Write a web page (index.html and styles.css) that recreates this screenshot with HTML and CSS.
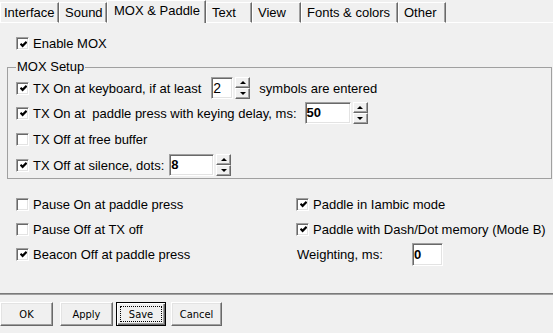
FILE: index.html
```html
<!DOCTYPE html>
<html lang="en">
<head>
  <meta charset="UTF-8" />
  <title>Settings - MOX &amp; Paddle</title>
  <link rel="stylesheet" href="styles.css">
</head>
<body>

  <div class="tabs">
    <div class="tab tab-first">Interface</div>
    <div class="tab">Sound</div>
    <div class="tab tab-active">MOX &amp; Paddle</div>
    <div class="tab">Text</div>
    <div class="tab">View</div>
    <div class="tab">Fonts &amp; colors</div>
    <div class="tab">Other</div>
    <div class="tab-rest"></div>
  </div>

  <main class="panel">
    <div class="check check-enable">
      <span class="box"><svg viewBox="0 0 7 7" width="7" height="7"><polyline points="0.5,2.8 2.6,4.9 6.6,0.9" /></svg></span>
      Enable MOX
    </div>

    <fieldset class="group">
      <legend>MOX Setup</legend>

      <div class="row">
        <span class="box"><svg viewBox="0 0 7 7" width="7" height="7"><polyline points="0.5,2.8 2.6,4.9 6.6,0.9" /></svg></span>
        <span>TX On at keyboard, if at least</span>
        <span class="spin spin-symbols">
          <span class="edit edit-plain">2</span>
          <span class="spin-btns"><span class="spin-btn spin-up"></span><span class="spin-btn spin-down"></span></span>
        </span>
        <span class="after-spin">symbols are entered</span>
      </div>

      <div class="row">
        <span class="box"><svg viewBox="0 0 7 7" width="7" height="7"><polyline points="0.5,2.8 2.6,4.9 6.6,0.9" /></svg></span>
        <span>TX On at&nbsp; paddle press with keying delay, ms:</span>
        <span class="spin spin-delay">
          <span class="edit">50</span>
          <span class="spin-btns"><span class="spin-btn spin-up"></span><span class="spin-btn spin-down"></span></span>
        </span>
      </div>

      <div class="row row-tall">
        <span class="box"></span>
        <span>TX Off at free buffer</span>
      </div>

      <div class="row">
        <span class="box"><svg viewBox="0 0 7 7" width="7" height="7"><polyline points="0.5,2.8 2.6,4.9 6.6,0.9" /></svg></span>
        <span>TX Off at silence, dots:</span>
        <span class="spin spin-dots">
          <span class="edit">8</span>
          <span class="spin-btns"><span class="spin-btn spin-up"></span><span class="spin-btn spin-down"></span></span>
        </span>
      </div>
    </fieldset>

    <div class="options">
      <div class="col">
        <div class="row">
          <span class="box"></span>
          <span>Pause On at paddle press</span>
        </div>
        <div class="row">
          <span class="box"></span>
          <span>Pause Off at TX off</span>
        </div>
        <div class="row">
          <span class="box"><svg viewBox="0 0 7 7" width="7" height="7"><polyline points="0.5,2.8 2.6,4.9 6.6,0.9" /></svg></span>
          <span>Beacon Off at paddle press</span>
        </div>
      </div>

      <div class="col">
        <div class="row">
          <span class="box"><svg viewBox="0 0 7 7" width="7" height="7"><polyline points="0.5,2.8 2.6,4.9 6.6,0.9" /></svg></span>
          <span>Paddle in Iambic mode</span>
        </div>
        <div class="row">
          <span class="box"><svg viewBox="0 0 7 7" width="7" height="7"><polyline points="0.5,2.8 2.6,4.9 6.6,0.9" /></svg></span>
          <span>Paddle with Dash/Dot memory (Mode B)</span>
        </div>
        <div class="row">
          <span class="weight-label">Weighting, ms:</span>
          <span class="edit edit-weight">0</span>
        </div>
      </div>
    </div>
  </main>

  <div class="separator"></div>

  <div class="buttons">
    <button class="btn">OK</button>
    <button class="btn btn-apply">Apply</button>
    <button class="btn btn-save"><span class="focus">Save</span></button>
    <button class="btn btn-cancel">Cancel</button>
  </div>

</body>
</html>
```

FILE: styles.css
```css
/* base */
* {
  box-sizing: border-box;
}
body {
  margin: 0;
  width: 553px;
  height: 333px;
  overflow: hidden;
  background: #f0f0f0;
  color: #000;
  font-family: "Liberation Sans", Arial, sans-serif;
  font-size: 13px;
}

/* tab strip */
.tabs {
  display: grid;
  grid-template-columns: 59px 48px 99px 46px 49px 97px 48px 1fr;
  align-items: end;
  height: 23px;
}
.tab {
  height: 21px;
  padding-left: 5px;
  line-height: 19px;
  white-space: nowrap;
  border-top: 1px solid #fff;
  border-left: 1px solid #fff;
  border-right: 1px solid #696969;
  border-bottom: 1px solid #fff;
  box-shadow: inset -1px 0 #a0a0a0;
}
.tab-first {
  padding-left: 3px;
}
.tab-active {
  height: 23px;
  padding-left: 6px;
  border-bottom: none;
}
.tab-rest {
  height: 1px;
  background: #fff;
}

/* page */
.panel {
  padding: 13px 1px 0 7px;
}

.check,
.row {
  display: flex;
  align-items: center;
  white-space: nowrap;
}
.check-enable {
  height: 15px;
  padding-left: 9px;
}
.row {
  height: 22px;
}
.row-tall {
  height: 24px;
}

.box {
  flex: none;
  width: 13px;
  height: 13px;
  margin-right: 4px;
  display: flex;
  align-items: center;
  justify-content: center;
  background: #fff;
  border: 1px solid;
  border-color: #a0a0a0 #fff #fff #a0a0a0;
  box-shadow: inset 1px 1px #696969, inset -1px -1px #e3e3e3;
}
.box svg {
  display: block;
  margin: 1px 0 0 1px;
}
.box polyline {
  fill: none;
  stroke: #000;
  stroke-width: 2.2;
}

/* group box */
.group {
  margin: 9px 0 0 0;
  padding: 3px 8px 2px 8px;
  min-width: 0;
  border: 1px solid #a0a0a0;
  display: flex;
  flex-direction: column;
  gap: 3px;
}
.group legend {
  padding: 0 1px;
  margin: 0;
  line-height: 14px;
}

/* spin edits */
.spin {
  display: flex;
  height: 22px;
}
.spin-symbols { margin-left: 10px; }
.spin-delay { margin-left: 8px; }
.spin-dots { margin-left: 5px; }

.edit {
  display: block;
  height: 22px;
  padding-left: 1px;
  line-height: 20px;
  font-weight: 700;
  background: #fff;
  border: 1px solid;
  border-color: #a0a0a0 #fff #fff #a0a0a0;
  box-shadow: inset 1px 1px #696969, inset -1px -1px #e3e3e3;
}
.spin-symbols .edit { width: 22px; }
.spin-delay .edit { width: 46px; }
.spin-dots .edit { width: 45px; }
.edit-plain {
  font-weight: 400;
  font-size: 14px;
}

.spin-btns {
  display: flex;
  flex-direction: column;
  width: 15px;
  margin-left: 2px;
}
.spin-btn {
  flex: 1;
  display: flex;
  align-items: center;
  justify-content: center;
  background: #f0f0f0;
  border: 1px solid;
  border-color: #fff #696969 #696969 #fff;
  box-shadow: inset -1px -1px #a0a0a0;
}
.spin-up::before,
.spin-down::before {
  content: "";
  border-left: 3px solid transparent;
  border-right: 3px solid transparent;
}
.spin-up::before {
  border-bottom: 3px solid #000;
}
.spin-down::before {
  border-top: 3px solid #000;
}

.after-spin {
  margin-left: 9px;
}

/* lower options */
.options {
  display: grid;
  grid-template-columns: 280px 1fr;
  margin-top: 14px;
  padding-left: 9px;
}
.col {
  display: flex;
  flex-direction: column;
  gap: 3px;
}
.weight-label {
  width: 116px;
  padding-left: 1px;
}
.edit-weight {
  width: 31px;
  height: 23px;
  line-height: 21px;
}

/* footer */
.separator {
  margin-top: 28px;
  border-top: 1px solid #7a7a7a;
  border-bottom: 1px solid #a0a0a0;
}

.buttons {
  display: flex;
  margin-top: 7px;
}
.btn {
  width: 53px;
  height: 24px;
  padding: 0;
  display: flex;
  align-items: center;
  justify-content: center;
  font-family: "DejaVu Sans Condensed", "DejaVu Sans", sans-serif;
  font-stretch: condensed;
  font-size: 11px;
  color: #000;
  background: #f0f0f0;
  border: 1px solid;
  border-color: #fff #696969 #696969 #fff;
  box-shadow: inset -1px -1px #a0a0a0, inset 1px 1px #e3e3e3;
}
.btn-apply {
  margin-left: 7px;
}
.btn-save {
  width: 50px;
  margin-left: 3px;
  border-color: #000;
  box-shadow: inset 1px 1px #fff, inset -1px -1px #696969, inset -2px -2px #a0a0a0;
}
.btn-cancel {
  width: 51px;
  margin-left: 5px;
}
.focus {
  align-self: stretch;
  flex: 1;
  margin: 3px;
  display: flex;
  align-items: center;
  justify-content: center;
  border: 1px dotted #000;
}
```
